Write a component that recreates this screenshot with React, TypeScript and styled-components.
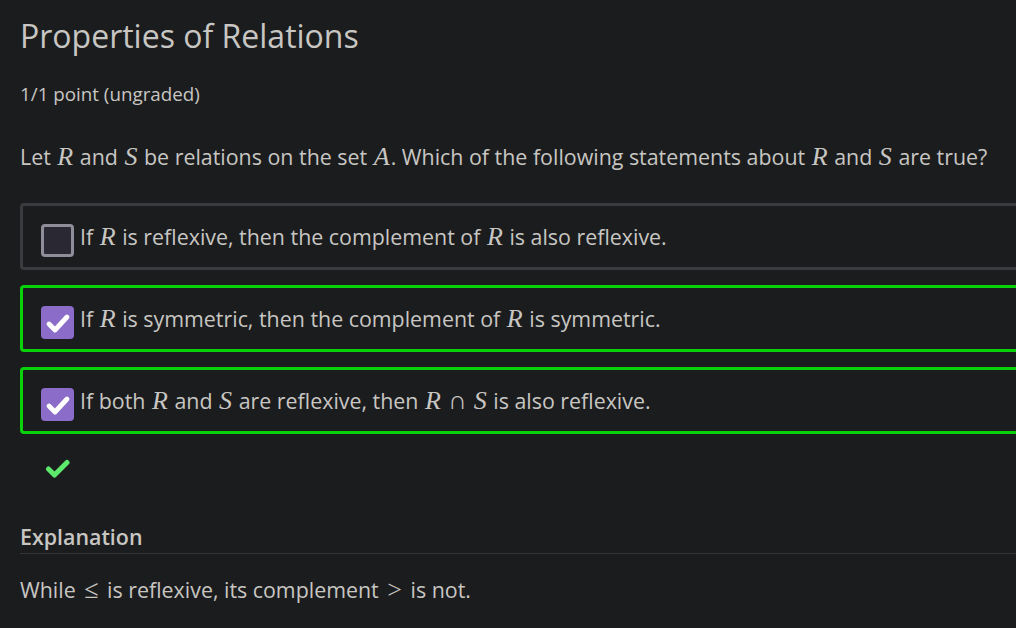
import React from "react";
import styled, { createGlobalStyle } from "styled-components";

const Global = createGlobalStyle`
  html, body { margin: 0; padding: 0; background: #1b1c1e; }
  body { font-family: "Open Sans", "Noto Sans", sans-serif; color: #c8c6c2; overflow: hidden; }
`;

const Page = styled.div`
  width: 1016px;
  height: 628px;
  overflow: hidden;
  padding: 16px 0 0 20px;
  box-sizing: border-box;
`;

const Title = styled.h1`
  margin: 0;
  font-size: 32px;
  font-weight: 400;
  line-height: 40px;
  color: #c8c6c2;
`;

const Points = styled.div`
  margin-top: 26px;
  font-size: 18.8px;
  line-height: 24px;
`;

const Question = styled.p`
  margin: 37px 0 0;
  font-size: 21.4px;
  line-height: 28px;
`;

const Options = styled.div`
  margin-top: 32px;
  display: flex;
  flex-direction: column;
  gap: 15px;
`;

const Option = styled.label<{ $correct?: boolean }>`
  width: 1030px;
  height: 67px;
  box-sizing: border-box;
  border: 3px solid ${(p) => (p.$correct ? "#0ad20a" : "#3a3b3e")};
  border-radius: 4px;
  display: flex;
  align-items: center;
  gap: 6px;
  padding-left: 18px;
  font-size: 21.4px;
`;

const Box = styled.span<{ $checked?: boolean }>`
  width: 33px;
  height: 33px;
  margin-top: 8px;
  box-sizing: border-box;
  border-radius: 4px;
  flex: none;
  display: flex;
  align-items: center;
  justify-content: center;
  background: ${(p) => (p.$checked ? "#8b6cc9" : "#2a2933")};
  border: ${(p) => (p.$checked ? "none" : "3px solid #8e8d99")};
`;

const OptionText = styled.span`
  line-height: 28px;
`;

const M = styled.span`
  font-family: "Liberation Serif", "DejaVu Serif", serif;
  font-style: italic;
  font-size: 26px;
  padding: 0 1px;
`;

const Op = styled.span<{ $pad: number }>`
  font-family: "Liberation Serif", "DejaVu Serif", serif;
  font-size: 26px;
  padding: 0 ${(p) => p.$pad}px;
`;

const Result = styled.div`
  margin-top: 25px;
  padding-left: 25px;
  height: 20px;
`;

const Heading = styled.h2`
  margin: 44px 0 0;
  font-size: 21.4px;
  font-weight: 600;
  line-height: 28px;
  padding-bottom: 2px;
  border-bottom: 1px solid #333437;
  width: 1030px;
`;

const Explanation = styled.p`
  margin: 22px 0 0;
  font-size: 21.4px;
  line-height: 28px;
`;

const Check = () => (
  <svg width="33" height="33" viewBox="0 0 33 33">
    <polyline points="8,18 14,24 26,11" fill="none" stroke="#fff" strokeWidth="4.8" strokeLinecap="round" strokeLinejoin="round" />
  </svg>
);

const GreenCheck = () => (
  <svg width="26" height="20" viewBox="0 0 26 20">
    <polyline points="3.5,10 9.5,16 22,3.5" fill="none" stroke="#5de96b" strokeWidth="5" strokeLinecap="round" strokeLinejoin="round" />
  </svg>
);

export default function App() {
  return (
    <>
      <Global />
      <Page>
        <Title>Properties of Relations</Title>
        <Points>1/1 point (ungraded)</Points>
        <Question>
          Let <M>R</M> and <M>S</M> be relations on the set <M>A</M>. Which of the following statements about <M>R</M> and <M>S</M> are true?
        </Question>
        <Options>
          <Option>
            <Box />
            <OptionText>
              If <M>R</M> is reflexive, then the complement of <M>R</M> is also reflexive.
            </OptionText>
          </Option>
          <Option $correct>
            <Box $checked>
              <Check />
            </Box>
            <OptionText>
              If <M>R</M> is symmetric, then the complement of <M>R</M> is symmetric.
            </OptionText>
          </Option>
          <Option $correct>
            <Box $checked>
              <Check />
            </Box>
            <OptionText>
              If both <M>R</M> and <M>S</M> are reflexive, then <M>R</M>
              <Op $pad={6}>∩</Op>
              <M>S</M> is also reflexive.
            </OptionText>
          </Option>
        </Options>
        <Result>
          <GreenCheck />
        </Result>
        <Heading>Explanation</Heading>
        <Explanation>
          While <Op $pad={3}>≤</Op> is reflexive, its complement <Op $pad={3}>&gt;</Op> is not.
        </Explanation>
      </Page>
    </>
  );
}
